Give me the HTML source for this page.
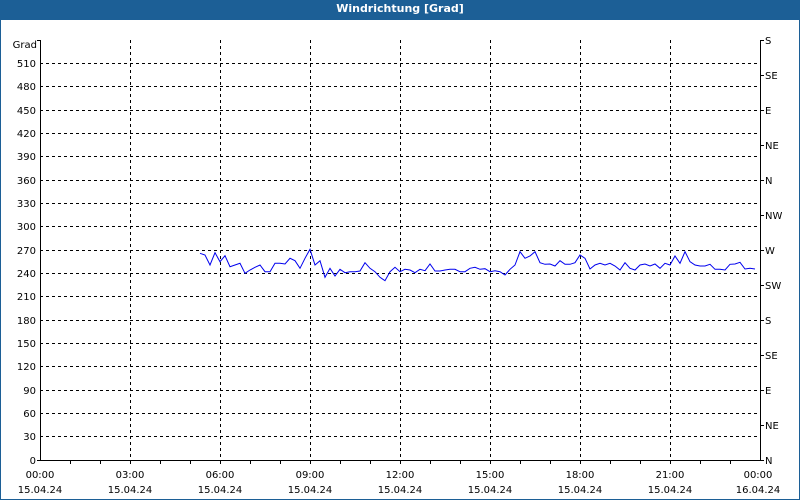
<!DOCTYPE html>
<html><head><style>
html,body{margin:0;padding:0;}
body{width:800px;height:500px;overflow:hidden;background:#fff;position:relative;}
#frame{position:absolute;left:0;top:0;width:798px;height:498px;border:1px solid #1c5f96;}
#title{position:absolute;left:0;top:0;width:800px;height:20px;background:#1c5f96;color:#fff;font:bold 11px "DejaVu Sans","Liberation Sans",sans-serif;text-align:center;line-height:18px;}
svg{position:absolute;left:0;top:0;}
text{font-family:"DejaVu Sans","Liberation Sans",sans-serif;font-size:10px;fill:#000;}
</style></head><body>
<div id="frame"></div>
<div id="title">Windrichtung [Grad]</div>
<svg width="800" height="500" viewBox="0 0 800 500">
<g stroke="#000" stroke-width="1" stroke-dasharray="3,3" shape-rendering="crispEdges">
<line x1="130.5" y1="40" x2="130.5" y2="460"/><line x1="220.5" y1="40" x2="220.5" y2="460"/>
<line x1="310.5" y1="40" x2="310.5" y2="460"/><line x1="400.5" y1="40" x2="400.5" y2="460"/>
<line x1="490.5" y1="40" x2="490.5" y2="460"/><line x1="580.5" y1="40" x2="580.5" y2="460"/>
<line x1="670.5" y1="40" x2="670.5" y2="460"/>
<line x1="40" y1="63.5" x2="760" y2="63.5"/><line x1="40" y1="86.5" x2="760" y2="86.5"/>
<line x1="40" y1="110.5" x2="760" y2="110.5"/><line x1="40" y1="133.5" x2="760" y2="133.5"/>
<line x1="40" y1="156.5" x2="760" y2="156.5"/><line x1="40" y1="180.5" x2="760" y2="180.5"/>
<line x1="40" y1="203.5" x2="760" y2="203.5"/><line x1="40" y1="226.5" x2="760" y2="226.5"/>
<line x1="40" y1="250.5" x2="760" y2="250.5"/><line x1="40" y1="273.5" x2="760" y2="273.5"/>
<line x1="40" y1="296.5" x2="760" y2="296.5"/><line x1="40" y1="320.5" x2="760" y2="320.5"/>
<line x1="40" y1="343.5" x2="760" y2="343.5"/><line x1="40" y1="366.5" x2="760" y2="366.5"/>
<line x1="40" y1="390.5" x2="760" y2="390.5"/><line x1="40" y1="413.5" x2="760" y2="413.5"/>
<line x1="40" y1="436.5" x2="760" y2="436.5"/>
</g>
<g stroke="#000" stroke-width="1" shape-rendering="crispEdges" fill="none">
<polyline points="40.5,40 40.5,460.5 760.5,460.5 760.5,40"/>
<path d="M37 460.5H40M37 40.5H40M70.5 460V464M100.5 460V464M130.5 460V464M160.5 460V464M190.5 460V464M220.5 460V464M250.5 460V464M280.5 460V464M310.5 460V464M340.5 460V464M370.5 460V464M400.5 460V464M430.5 460V464M460.5 460V464M490.5 460V464M520.5 460V464M550.5 460V464M580.5 460V464M610.5 460V464M640.5 460V464M670.5 460V464M700.5 460V464M730.5 460V464M760 40.5H764M760 75.5H764M760 110.5H764M760 145.5H764M760 180.5H764M760 215.5H764M760 250.5H764M760 285.5H764M760 320.5H764M760 355.5H764M760 390.5H764M760 425.5H764M760 460.5H764"/>
</g>
<polyline fill="none" stroke="#0000ee" stroke-width="1" points="200,253.3 205,255 210,265 215,252.7 220,261.7 225,255.7 230,266.7 235,265 240,263.3 245,273.3 250,270 255,267.3 260,265 265,271.7 270,271.7 275,263.3 280,263.3 285,264 290,258.3 295,260.7 300,268.3 305,258.3 310,249.3 315,265 320,260.7 325,277.3 330,268.3 335,276 340,269.3 345,272.7 350,271.7 355,271.7 360,271 365,262.7 370,268.3 375,271.7 380,277.3 385,280.7 390,271.7 395,267.3 400,271.7 405,269.3 410,270 415,272.7 420,269.3 425,270.7 430,264 435,271 440,271 445,270 450,269.3 455,269.3 460,271.7 465,271.7 470,268.3 475,267.3 480,269.3 485,268.7 490,271.7 495,270.7 500,271.7 505,275 510,269.3 515,265 520,251.7 525,258.3 530,256 535,251.7 540,262.7 545,264.3 550,264 555,266 560,260.7 565,264.3 570,264.3 575,262.7 580,255 585,258.3 590,269 595,265 600,263.3 605,265 610,263.3 615,266 620,270 625,262.7 630,268.3 635,270 640,265 645,264 650,266 655,264 660,268.3 665,263.3 670,265 675,256 680,263.3 685,251.7 690,261.7 695,265 700,266 705,266 710,264.3 715,269.3 720,269.3 725,270 730,264.3 735,264 740,262.3 745,269 750,268.3 755,269"/>
<g text-anchor="end">
<text x="37" y="48">Grad</text>
<text x="36" y="67">510</text><text x="36" y="90">480</text><text x="36" y="114">450</text>
<text x="36" y="137">420</text><text x="36" y="160">390</text><text x="36" y="184">360</text>
<text x="36" y="207">330</text><text x="36" y="230">300</text><text x="36" y="254">270</text>
<text x="36" y="277">240</text><text x="36" y="300">210</text><text x="36" y="324">180</text>
<text x="36" y="347">150</text><text x="36" y="370">120</text><text x="36" y="394">90</text>
<text x="36" y="417">60</text><text x="36" y="440">30</text><text x="36" y="464">0</text>
</g>
<g>
<text x="765" y="44">S</text><text x="765" y="79">SE</text><text x="765" y="114">E</text>
<text x="765" y="149">NE</text><text x="765" y="184">N</text><text x="765" y="219">NW</text>
<text x="765" y="254">W</text><text x="765" y="289">SW</text><text x="765" y="324">S</text>
<text x="765" y="359">SE</text><text x="765" y="394">E</text><text x="765" y="429">NE</text>
<text x="765" y="464">N</text>
</g>
<g text-anchor="middle">
<text x="40" y="478">00:00</text><text x="40" y="493">15.04.24</text>
<text x="130" y="478">03:00</text><text x="130" y="493">15.04.24</text>
<text x="220" y="478">06:00</text><text x="220" y="493">15.04.24</text>
<text x="310" y="478">09:00</text><text x="310" y="493">15.04.24</text>
<text x="400" y="478">12:00</text><text x="400" y="493">15.04.24</text>
<text x="490" y="478">15:00</text><text x="490" y="493">15.04.24</text>
<text x="580" y="478">18:00</text><text x="580" y="493">15.04.24</text>
<text x="670" y="478">21:00</text><text x="670" y="493">15.04.24</text>
<text x="758" y="478">00:00</text><text x="758" y="493">16.04.24</text>
</g>
</svg>
</body></html>
